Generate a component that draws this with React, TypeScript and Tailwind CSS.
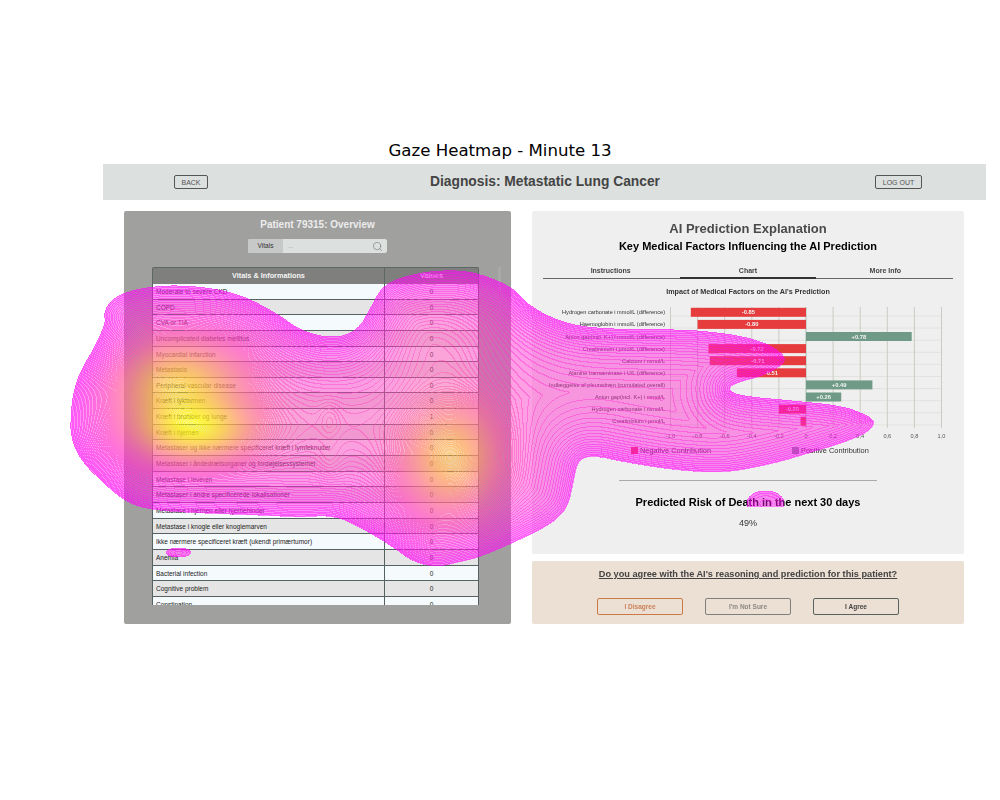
import React, { useEffect, useRef } from "react";
import { Search } from "lucide-react";

const rows: [string, number][] = [
  ["Moderate to severe CKD", 0],
  ["COPD", 0],
  ["CVA or TIA", 0],
  ["Uncomplicated diabetes mellitus", 0],
  ["Myocardial infarction", 0],
  ["Metastasis", 0],
  ["Peripheral vascular disease", 0],
  ["Kræft i tyktarmen", 0],
  ["Kræft i bronkier og lunge", 1],
  ["Kræft i hjernen", 0],
  ["Metastaser og ikke nærmere specificeret kræft i lymfeknuder", 0],
  ["Metastaser i åndedrætsorganer og fordøjelsessystemet", 0],
  ["Metastase i leveren", 0],
  ["Metastaser i andre specificerede lokalisationer", 0],
  ["Metastase i hjernen eller hjernehinder", 0],
  ["Metastase i knogle eller knoglemarven", 0],
  ["Ikke nærmere specificeret kræft (ukendt primærtumor)", 0],
  ["Anemia", 0],
  ["Bacterial infection", 0],
  ["Cognitive problem", 0],
  ["Constipation", 0],
];

const factors: [string, number][] = [
  ["Hydrogen carbonate i mmol/L (difference)", -0.85],
  ["Haemoglobin i mmol/L (difference)", -0.8],
  ["Anion gap(incl. K+) i mmol/L (difference)", 0.78],
  ["Creatininium i µmol/L (difference)", -0.72],
  ["Calcium i mmol/L", -0.71],
  ["Alanine transaminase i U/L (difference)", -0.51],
  ["Indlæggelse af pleuradræn (cumulated overall)", 0.49],
  ["Anion gap(incl. K+) i mmol/L", 0.26],
  ["Hydrogen carbonate i mmol/L", -0.2],
  ["Creatininium i µmol/L", -0.04],
];

const ticks = ["-1,0", "-0,8", "-0,6", "-0,4", "-0,2", "0", "0,2", "0,4", "0,6", "0,8", "1,0"];

// outline of the gaze area, page coordinates
const outline: number[][] = [
  [103, 312], [110, 300], [127, 290], [167, 284], [210, 287], [243, 295], [277, 313], [300, 330],
  [333, 338], [357, 330], [370, 307], [383, 283], [417, 272], [453, 269], [480, 273], [513, 287],
  [525, 302], [552, 318], [585, 327], [642, 329], [692, 329], [742, 335], [772, 345], [787, 358],
  [778, 368], [758, 377], [738, 382], [727, 388], [738, 395], [792, 400], [842, 405], [868, 415],
  [875, 422], [868, 432], [842, 443], [808, 453], [775, 463], [725, 473], [675, 470], [625, 462],
  [592, 455], [578, 460], [574, 477], [568, 507], [552, 523], [525, 537], [480, 557], [453, 563],
  [437, 567], [413, 562], [393, 547], [360, 527], [333, 515], [300, 517], [260, 515], [200, 513],
  [153, 510], [127, 503], [103, 483], [80, 460], [70, 437], [70, 413], [73, 390], [80, 370],
  [92, 350], [105, 323],
];

// gaze blobs: x, y, sigma x, sigma y, weight
const blobs: number[][] = [
  [178, 385, 42, 30, 0.55],
  [195, 432, 38, 20, 0.58],
  [450, 458, 32, 38, 0.48],
  [320, 425, 70, 45, 0.06],
  [430, 340, 40, 35, 0.08],
  [329, 418, 7, 12, 0.03],
  [329, 462, 9, 14, 0.03],
];

function chaikin(points: number[][]) {
  const out: number[][] = [];
  points.forEach((p, i) => {
    const q = points[(i + 1) % points.length];
    out.push([p[0] * 0.75 + q[0] * 0.25, p[1] * 0.75 + q[1] * 0.25]);
    out.push([p[0] * 0.25 + q[0] * 0.75, p[1] * 0.25 + q[1] * 0.75]);
  });
  return out;
}

function GazeOverlay() {
  const ref = useRef<HTMLCanvasElement>(null);

  useEffect(() => {
    const ctx = ref.current?.getContext("2d");
    if (!ctx) return;
    const W = 1000;
    const H = 800;
    const img = ctx.createImageData(W, H);
    const poly = chaikin(chaikin(outline));
    const floor = 0.03;
    const step = 0.009;
    const levels = new Int32Array(W * H).fill(-1);
    const dens = new Float32Array(W * H);

    for (let y = 260; y < 580; y++) {
      for (let x = 60; x < 885; x++) {
        let d = -1;
        // small separate fixations
        const e1 = ((x - 178) / 13) ** 2 + ((y - 552) / 5) ** 2;
        const e2 = ((x - 765) / 19) ** 2 + ((y - 503) / 13) ** 2;
        if (e1 < 1) d = floor + 0.03 * (1 - e1);
        if (e2 < 1 && y < 507) d = floor + 0.03 * (1 - e2);

        let inside = false;
        let best = 1e9;
        for (let i = 0, j = poly.length - 1; i < poly.length; j = i++) {
          const [ax, ay] = poly[i];
          const [bx, by] = poly[j];
          if (ay > y !== by > y && x < ((bx - ax) * (y - ay)) / (by - ay) + ax) inside = !inside;
          const vx = bx - ax;
          const vy = by - ay;
          const u = Math.max(0, Math.min(1, ((x - ax) * vx + (y - ay) * vy) / (vx * vx + vy * vy)));
          const ex = ax + u * vx - x;
          const ey = ay + u * vy - y;
          const dist = ex * ex + ey * ey;
          if (dist < best) best = dist;
        }
        if (inside) {
          const dist = Math.sqrt(best);
          d = floor + 0.2 * (1 - Math.exp(-dist / 35));
          const fade = 1 - Math.exp(-dist / 15);
          for (const [bx, by, sx, sy, a] of blobs) {
            const dx = (x - bx) / sx;
            const dy = (y - by) / sy;
            d += fade * a * Math.exp(-(dx * dx + dy * dy) / 2);
          }
        }
        if (d > 0) {
          dens[y * W + x] = d;
          levels[y * W + x] = Math.floor((d - floor) / step);
        }
      }
    }

    for (let y = 1; y < H; y++) {
      for (let x = 1; x < W; x++) {
        const i = y * W + x;
        const l = levels[i];
        if (l < 0) continue;
        const line = l !== levels[i - 1] || l !== levels[i - W];
        const t = Math.min(1, dens[i]);
        const p = i * 4;
        img.data[p] = 255;
        img.data[p + 1] = 255 * t;
        img.data[p + 2] = 255 * (1 - t);
        img.data[p + 3] = 255 * ((line ? 0.68 : 0.46) + 0.1 * t);
      }
    }
    ctx.putImageData(img, 0, 0);
  }, []);

  return (
    <canvas
      ref={ref}
      width={1000}
      height={800}
      className="absolute inset-0 pointer-events-none"
    />
  );
}

function FactorChart() {
  const x0 = 274;
  const unit = 135.5;
  return (
    <svg width={432} height={150} className="block">
      {factors.map((_, i) => (
        <line key={i} x1={138} x2={410} y1={25 + i * 12.1 - 6} y2={25 + i * 12.1 - 6} stroke="#e2e2df" strokeWidth={1} />
      ))}
      {ticks.map((t, i) => {
        const x = x0 + (i - 5) * unit * 0.2;
        return (
          <g key={t}>
            <line x1={x} x2={x} y1={10} y2={131} stroke={t === "0" ? "#a9bdb2" : "#cbcbc3"} strokeWidth={1} />
            <text x={x} y={141} textAnchor="middle" fontSize={5.6} fill="#555">
              {t}
            </text>
          </g>
        );
      })}
      {factors.map(([label, v], i) => {
        const y = 15.3 + i * 12.1;
        const w = Math.abs(v) * unit;
        const x = v < 0 ? x0 - w : x0;
        return (
          <g key={label}>
            <text x={133} y={y + 2} textAnchor="end" fontSize={5.6} fill="#333">
              {label}
            </text>
            <rect x={x} y={y - 4.5} width={w} height={9} fill={v < 0 ? "#e63c3e" : "#6f9a87"} />
            {Math.abs(v) > 0.1 && (
              <text x={x + w / 2} y={y + 2} textAnchor="middle" fontSize={5.8} fontWeight={700} fill="#f4f4f4">
                {v > 0 ? "+" : ""}
                {v.toFixed(2)}
              </text>
            )}
          </g>
        );
      })}
    </svg>
  );
}

export default function App() {
  return (
    <div className="relative w-[1000px] h-[800px] bg-white overflow-hidden font-['Liberation_Sans',Arial,sans-serif]">
      <h1 className="h-[164px] pt-[140px] text-center text-[16.6px] leading-[22px] text-black font-['DejaVu_Sans',sans-serif]">
        Gaze Heatmap - Minute 13
      </h1>

      <div className="ml-[103px] w-[883px] blur-[0.4px]">
        {/* top bar */}
        <div className="h-9 bg-[#dce0df] flex items-center pl-[71px] pr-[64px]">
          <button className="w-[34px] h-[14px] border border-[#555] rounded-[2px] text-[7px] text-[#555] leading-none">
            BACK
          </button>
          <div className="flex-1 pl-[7px] text-center text-[13.8px] font-bold text-[#444]">
            Diagnosis: Metastatic Lung Cancer
          </div>
          <button className="w-[47px] h-[14px] border border-[#555] rounded-[2px] text-[7px] text-[#555] leading-none">
            LOG OUT
          </button>
        </div>

        <div className="flex gap-[21px] pl-[21px] pt-[11px]">
          {/* patient panel */}
          <div className="relative w-[387px] h-[413px] bg-[#a0a09f] rounded-[2px] pt-[6px]">
            <div className="text-center text-[10px] leading-[15px] font-bold text-[#ececec]">
              Patient 79315: Overview
            </div>
            <div className="mt-[7px] ml-[124px] w-[139px] h-[14px] flex rounded-[2px] overflow-hidden bg-[#dce0df]">
              <div className="w-[35px] bg-[#c6c9c8] text-center text-[6.5px] leading-[14px] text-[#333]">Vitals</div>
              <div className="flex-1 pl-[5px] text-[6.5px] leading-[14px] text-[#aaa]">...</div>
              <Search size={11} strokeWidth={1} className="mt-[1.5px] mr-[4px] text-[#555]" />
            </div>
            <div className="absolute right-[10px] top-[56px] w-[3px] h-[24px] bg-[#a9a9a8]" />
            <div className="mt-[14px] ml-[28px] w-[327px] h-[338px] overflow-hidden">
              <div className="flex h-[17px] bg-[#7f7f7d] border-t border-x border-[#5f6666] rounded-t-[2px] text-[7.3px] font-bold text-[#f5f5f5] leading-[15px]">
                <div className="w-[232px] text-center border-r border-[#5f6666]">Vitals & Informations</div>
                <div className="flex-1 text-center">Values</div>
              </div>
              {rows.map(([name, value], i) => (
                <div
                  key={name}
                  className={`flex h-[15.65px] border-x border-b border-[#566262] text-[6.5px] leading-[15px] text-[#222] ${
                    i % 2 === 0 ? "bg-[#f5fafd]" : "bg-[#e5e5e5]"
                  }`}
                >
                  <div className="w-[232px] pl-[3px] border-r border-[#566262] whitespace-nowrap">{name}</div>
                  <div className="flex-1 text-center">{value}</div>
                </div>
              ))}
            </div>
          </div>

          <div className="w-[432px]">
            {/* explanation panel */}
            <div className="h-[343px] bg-[#efefef] rounded-[2px] pt-[9px]">
              <div className="text-center text-[13px] leading-[17px] font-bold text-[#4a4a4a]">
                AI Prediction Explanation
              </div>
              <div className="mt-[2px] text-center text-[11px] leading-[15px] font-bold text-black">
                Key Medical Factors Influencing the AI Prediction
              </div>
              <div className="mt-[7px] mx-[11px] flex h-[18px] border-b border-[#666] text-[7px] font-bold text-[#444] text-center leading-[19px]">
                <div className="flex-1">Instructions</div>
                <div className="flex-1 mx-[2px] h-[18px] border-b-2 border-[#333]">Chart</div>
                <div className="flex-1">More Info</div>
              </div>
              <div className="mt-[8px] text-center text-[7.2px] leading-[10px] font-bold text-[#333]">
                Impact of Medical Factors on the AI's Prediction
              </div>
              <FactorChart />
              <div className="h-[33px] flex text-[7.4px] leading-[8px] text-[#333]">
                <div className="ml-[99px] w-[161px] flex items-start gap-[2px]">
                  <span className="w-[7px] h-[7px] bg-[#e63c3e]" />
                  <span>Negative Contribution</span>
                </div>
                <div className="flex items-start gap-[2px]">
                  <span className="w-[7px] h-[7px] bg-[#6f9a87]" />
                  <span>Positive Contribution</span>
                </div>
              </div>
              <div className="mx-[87px] h-px bg-[#aaa]" />
              <div className="mt-[14px] text-center text-[11px] leading-[15px] font-bold text-black">
                Predicted Risk of Death in the next 30 days
              </div>
              <div className="mt-[7px] text-center text-[9px] leading-[12px] text-[#333]">49%</div>
            </div>

            {/* agreement panel */}
            <div className="mt-[7px] h-[63px] bg-[#ecdfd3] rounded-[2px] pt-[7px]">
              <div className="text-center text-[9.2px] leading-[12px] font-bold underline text-[#444]">
                Do you agree with the AI's reasoning and prediction for this patient?
              </div>
              <div className="mt-[18px] flex justify-center gap-[22px] text-[6.5px] font-bold">
                <button className="w-[86px] h-[17px] border border-[#cc7a45] rounded-[2px] text-[#c9835a]">I Disagree</button>
                <button className="w-[86px] h-[17px] border border-[#7d807d] rounded-[2px] text-[#8a8a88]">I'm Not Sure</button>
                <button className="w-[86px] h-[17px] border border-[#5a625f] rounded-[2px] text-[#444]">I Agree</button>
              </div>
            </div>
          </div>
        </div>
      </div>

      <GazeOverlay />
    </div>
  );
}
